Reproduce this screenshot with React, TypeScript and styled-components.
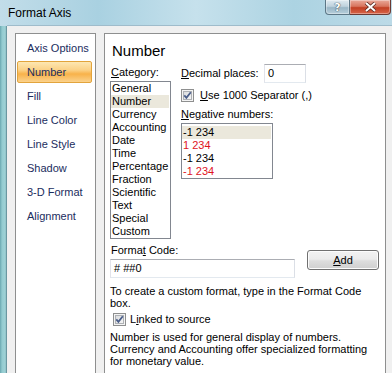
import styled, { createGlobalStyle } from 'styled-components';

const GlobalStyle = createGlobalStyle`
  html, body {
    margin: 0;
    padding: 0;
  }
  body {
    font-family: "Liberation Sans", Arial, sans-serif;
    font-size: 11px;
    color: #000;
  }
`;

const Window = styled.div`
  width: 392px;
  height: 373px;
  overflow: hidden;
  display: flex;
  flex-direction: column;
  background: linear-gradient(to right, #c2dde9 0%, #a9d1e1 25%, #c6e1ec 50%, #acd3e2 75%, #bcdae7 100%);
`;

const TitleBar = styled.div`
  height: 26px;
  display: flex;
  align-items: flex-start;
  padding-left: 8px;
  flex-shrink: 0;
`;

const Title = styled.div`
  font-size: 12px;
  line-height: 26px;
  color: #000;
`;

const Controls = styled.div`
  margin-left: auto;
  margin-right: 1px;
  display: flex;
`;

const CaptionButton = styled.div<{ $close?: boolean }>`
  width: ${({ $close }) => ($close ? '41px' : '25px')};
  height: 15px;
  box-sizing: border-box;
  display: flex;
  align-items: center;
  justify-content: center;
  border: 1px solid ${({ $close }) => ($close ? '#6b3a33' : '#5c7685')};
  border-top: none;
  border-left-width: ${({ $close }) => ($close ? '0' : '1px')};
  border-radius: ${({ $close }) => ($close ? '0 0 4px 0' : '0 0 0 4px')};
  background: ${({ $close }) =>
    $close
      ? 'linear-gradient(to bottom, #e9a99a 0%, #d8755f 45%, #c23f24 55%, #d8664a 100%)'
      : 'linear-gradient(to bottom, #dfeaf0 0%, #bfd2dd 45%, #9ab6c6 55%, #b6cfdb 100%)'};
  box-shadow: inset 0 0 0 1px rgba(255, 255, 255, 0.35);
`;

const HelpGlyph = styled.span`
  font-family: "DejaVu Sans", sans-serif;
  font-weight: bold;
  font-size: 11px;
  line-height: 1;
  color: #fff;
  text-shadow: 0 0 1px #2c3d48, 0 0 1px #2c3d48;
`;

const Frame = styled.div`
  flex: 1;
  display: flex;
  min-height: 0;
`;

const FrameEdge = styled.div`
  width: 7px;
  flex-shrink: 0;
  background: linear-gradient(to right, #6aa8b0 0%, #93cbd0 30%, #9fd2d6 75%, #55808c 100%);
`;

const Client = styled.div`
  flex: 1;
  display: flex;
  background: #f0f0f0;
  padding: 7px 6px 0 8px;
  border-top: 1px solid #9fbccb;
  margin-top: -1px;
`;

const Nav = styled.div`
  width: 81px;
  box-sizing: border-box;
  flex-shrink: 0;
  background: #fff;
  border: 1px solid #8e8f8f;
  border-bottom: none;
  padding: 3px 3px 0 1px;
  display: flex;
  flex-direction: column;
  gap: 2px;
`;

const NavItem = styled.div<{ $active?: boolean }>`
  height: 22px;
  box-sizing: border-box;
  line-height: ${({ $active }) => ($active ? '20px' : '22px')};
  padding-left: ${({ $active }) => ($active ? '9px' : '10px')};
  color: #1b2d5e;
  border-radius: 2px;
  border: ${({ $active }) => ($active ? '1px solid #e2a43c' : 'none')};
  background: ${({ $active }) =>
    $active ? 'linear-gradient(to bottom, #fde7b2 0%, #fbd186 40%, #f8b24a 60%, #fbd28c 100%)' : 'transparent'};
`;

const Panel = styled.div`
  flex: 1;
  margin-left: 8px;
  background: #fff;
  border: 1px solid #8e8f8f;
  border-bottom: none;
  padding: 8px 0 0 5px;
  display: flex;
  flex-direction: column;
`;

const Heading = styled.h2`
  margin: 0;
  padding-left: 2px;
  font-size: 15px;
  line-height: 18px;
  font-weight: normal;
`;

const TopArea = styled.div`
  display: flex;
  margin-top: 4px;
`;

const CategoryCol = styled.div`
  width: 61px;
  padding-top: 2px;
  display: flex;
  flex-direction: column;
`;

const Label = styled.div`
  line-height: 13px;
  padding-left: 1px;
  white-space: nowrap;
`;

const ListBox = styled.div<{ $w: number; $h: number; $pt?: number }>`
  width: ${({ $w }) => $w}px;
  height: ${({ $h }) => $h}px;
  box-sizing: border-box;
  border: 1px solid #828790;
  margin-top: 2px;
  padding-top: ${({ $pt }) => $pt ?? 0}px;
  background: #fff;
`;

const ListItem = styled.div<{ $selected?: boolean; $red?: boolean }>`
  line-height: 13px;
  padding-left: 1px;
  margin: 0 1px 0 0;
  white-space: nowrap;
  color: ${({ $red }) => ($red ? '#e0141e' : '#000')};
  background: ${({ $selected }) => ($selected ? '#ebe8dc' : 'transparent')};
`;

const OptionsCol = styled.div`
  margin-left: 10px;
  display: flex;
  flex-direction: column;
`;

const FieldRow = styled.div`
  display: flex;
  align-items: center;
  height: 19px;
`;

const FieldLabel = styled.div`
  width: 83px;
  line-height: 13px;
`;

const TextBox = styled.div<{ $w: number }>`
  width: ${({ $w }) => $w}px;
  height: 19px;
  box-sizing: border-box;
  border: 1px solid #abadb3;
  border-color: #abadb3 #dbdfe6 #e3e9ef #e2e3ea;
  padding-left: 3px;
  line-height: 17px;
  background: #fff;
`;

const CheckRow = styled.div<{ $gap: number; $indent?: number }>`
  display: flex;
  align-items: center;
  gap: ${({ $gap }) => $gap}px;
  height: 13px;
  padding-left: ${({ $indent }) => $indent ?? 0}px;
  line-height: 13px;
  white-space: nowrap;
`;

const FormatArea = styled.div`
  display: flex;
  margin-top: 5px;
`;

const FormatCol = styled.div`
  display: flex;
  flex-direction: column;
`;

const AddButton = styled.div`
  width: 72px;
  height: 20px;
  box-sizing: border-box;
  margin: 6px 0 0 12px;
  border: 1px solid #707070;
  border-radius: 3px;
  background: linear-gradient(to bottom, #f2f2f2 0%, #ebebeb 45%, #dddddd 55%, #cfcfcf 100%);
  box-shadow: inset 0 0 0 1px #fcfcfc;
  text-align: center;
  line-height: 18px;
`;

const Hint = styled.p<{ $mt: number }>`
  margin: ${({ $mt }) => $mt}px 0 0 0;
  width: 268px;
  line-height: 12px;
`;

const Key = styled.span`
  text-decoration: underline;
`;

const CheckBox = () => (
  <svg width="13" height="13" viewBox="0 0 13 13" style={{ flexShrink: 0 }}>
    <defs>
      <linearGradient id="cbfill" x1="0" y1="0" x2="1" y2="1">
        <stop offset="0" stopColor="#d9dbdd" />
        <stop offset="1" stopColor="#f6f6f6" />
      </linearGradient>
    </defs>
    <rect x="0.5" y="0.5" width="12" height="12" fill="#f4f4f4" stroke="#8e8f8f" />
    <rect x="2.5" y="2.5" width="8" height="8" fill="url(#cbfill)" stroke="#aeb1b5" />
    <path d="M3.3 6.4 L5.4 8.8 L9.8 3.2" fill="none" stroke="#4a5e8a" strokeWidth="1.8" />
  </svg>
);

const navItems = ['Axis Options', 'Number', 'Fill', 'Line Color', 'Line Style', 'Shadow', '3-D Format', 'Alignment'];

const categories = [
  'General',
  'Number',
  'Currency',
  'Accounting',
  'Date',
  'Time',
  'Percentage',
  'Fraction',
  'Scientific',
  'Text',
  'Special',
  'Custom',
];

const negatives = [
  { text: '-1 234', red: false },
  { text: '1 234', red: true },
  { text: '-1 234', red: false },
  { text: '-1 234', red: true },
];

export default function App() {
  return (
    <>
      <GlobalStyle />
      <Window>
        <TitleBar>
          <Title>Format Axis</Title>
          <Controls>
            <CaptionButton>
              <HelpGlyph>?</HelpGlyph>
            </CaptionButton>
            <CaptionButton $close>
              <svg width="13" height="10" viewBox="0 0 13 10">
                <path d="M2 1 L11 9 M11 1 L2 9" stroke="#5a2a22" strokeWidth="3.6" />
                <path d="M2 1 L11 9 M11 1 L2 9" stroke="#fff" strokeWidth="2" />
              </svg>
            </CaptionButton>
          </Controls>
        </TitleBar>
        <Frame>
          <FrameEdge />
          <Client>
            <Nav>
              {navItems.map(item => (
                <NavItem key={item} $active={item === 'Number'}>
                  {item}
                </NavItem>
              ))}
            </Nav>
            <Panel>
              <Heading>Number</Heading>
              <TopArea>
                <CategoryCol>
                  <Label>
                    <Key>C</Key>ategory:
                  </Label>
                  <ListBox $w={61} $h={158}>
                    {categories.map(c => (
                      <ListItem key={c} $selected={c === 'Number'}>
                        {c}
                      </ListItem>
                    ))}
                  </ListBox>
                </CategoryCol>
                <OptionsCol>
                  <FieldRow>
                    <FieldLabel>
                      <Key>D</Key>ecimal places:
                    </FieldLabel>
                    <TextBox $w={42}>0</TextBox>
                  </FieldRow>
                  <CheckRow $gap={6} style={{ marginTop: 6 }}>
                    <CheckBox />
                    <span>
                      <Key>U</Key>se 1000 Separator (,)
                    </span>
                  </CheckRow>
                  <Label style={{ marginTop: 6, paddingLeft: 0 }}>
                    <Key>N</Key>egative numbers:
                  </Label>
                  <ListBox $w={92} $h={56} $pt={2}>
                    {negatives.map((n, i) => (
                      <ListItem key={i} $red={n.red} $selected={i === 0}>
                        {n.text}
                      </ListItem>
                    ))}
                  </ListBox>
                </OptionsCol>
              </TopArea>
              <FormatArea>
                <FormatCol>
                  <Label>
                    Forma<Key>t</Key> Code:
                  </Label>
                  <TextBox $w={185} style={{ marginTop: 2 }}>
                    # ##0
                  </TextBox>
                </FormatCol>
                <AddButton>
                  <Key>A</Key>dd
                </AddButton>
              </FormatArea>
              <Hint $mt={7}>To create a custom format, type in the Format Code box.</Hint>
              <CheckRow $gap={4} $indent={3} style={{ marginTop: 4 }}>
                <CheckBox />
                <span>
                  L<Key>i</Key>nked to source
                </span>
              </CheckRow>
              <Hint $mt={5}>
                Number is used for general display of numbers. Currency and Accounting offer specialized formatting
                for monetary value.
              </Hint>
            </Panel>
          </Client>
        </Frame>
      </Window>
    </>
  );
}
